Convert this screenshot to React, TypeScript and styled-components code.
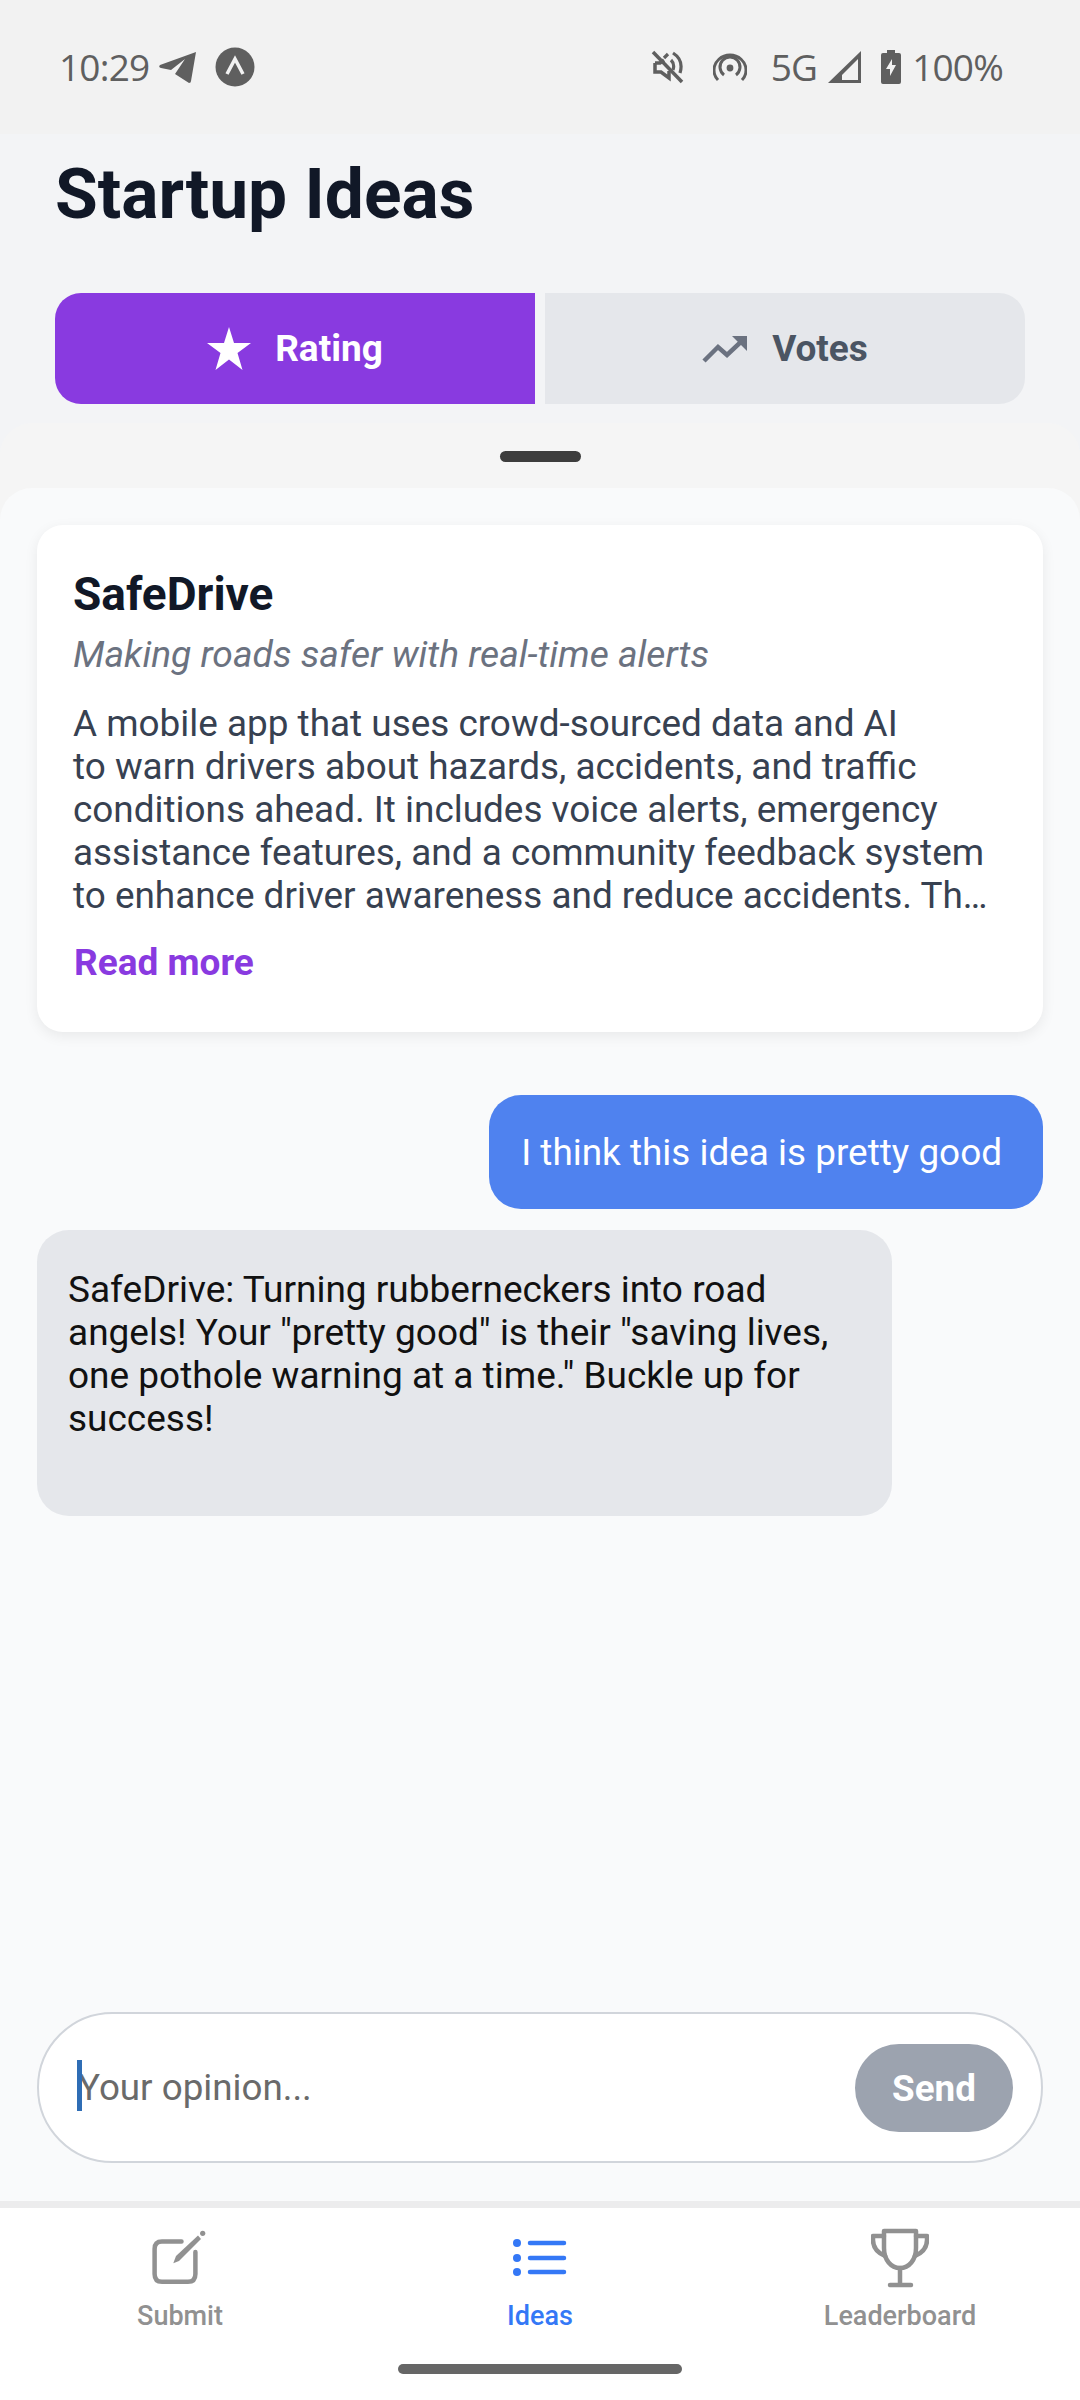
import React from "react";
import styled, { createGlobalStyle } from "styled-components";

const GlobalStyle = createGlobalStyle`
  html, body {
    margin: 0;
    padding: 0;
    background: #f3f4f6;
    font-family: Roboto, "Liberation Sans", sans-serif;
  }
  * { box-sizing: border-box; }
`;

const Screen = styled.div`
  width: 1080px;
  height: 2400px;
  display: flex;
  flex-direction: column;
  overflow: hidden;
  background: #f3f4f6;
`;

// System status bar
const StatusBar = styled.div`
  height: 134px;
  flex: none;
  background: #f2f2f2;
  display: flex;
  align-items: center;
  justify-content: space-between;
  padding: 0 77px 0 59px;
  color: #5f5f5f;
  font-size: 37px;
`;

const StatusGroup = styled.div`
  display: flex;
  align-items: center;
`;

const StatusText = styled.span<{ $left?: number }>`
  margin-left: ${(p) => p.$left ?? 0}px;
  font-family: "Open Sans", Roboto, sans-serif;
  letter-spacing: -0.8px;
  line-height: 40px;
`;

const StatusIcon = styled.svg<{ $left?: number }>`
  display: block;
  flex: none;
  margin-left: ${(p) => p.$left ?? 0}px;
`;

// Header + tabs
const Header = styled.div`
  flex: none;
  height: 159px;
  padding: 21px 55px 0;
`;

const Title = styled.h1`
  margin: 0;
  font-size: 69.5px;
  line-height: 80px;
  font-weight: 700;
  color: #111827;
`;

const Tabs = styled.div`
  flex: none;
  display: flex;
  gap: 10px;
  padding: 0 55px;
`;

const Tab = styled.div<{ $active?: boolean; $side: "left" | "right" }>`
  flex: 1;
  height: 111px;
  display: flex;
  align-items: center;
  justify-content: center;
  gap: 24px;
  background: ${(p) => (p.$active ? "#893ae0" : "#e5e7eb")};
  color: ${(p) => (p.$active ? "#ffffff" : "#4b5563")};
  border-radius: ${(p) => (p.$side === "left" ? "26px 0 0 26px" : "0 26px 26px 0")};
  font-size: 37px;
  font-weight: 700;
`;

// Bottom sheet
const SheetBackdrop = styled.div`
  flex: 1;
  min-height: 0;
  margin-top: 19px;
  display: flex;
  flex-direction: column;
  background: #f5f5f5;
  border-radius: 32px 32px 0 0;
`;

const HandleArea = styled.div`
  flex: none;
  height: 65px;
  padding-top: 28px;
  display: flex;
  justify-content: center;
`;

const Handle = styled.div`
  width: 81px;
  height: 11px;
  border-radius: 6px;
  background: #3d3d3d;
`;

const Sheet = styled.div`
  flex: 1;
  min-height: 0;
  display: flex;
  flex-direction: column;
  padding: 37px 37px 38px;
  background: #f9fafb;
  border-radius: 32px 32px 0 0;
`;

const Card = styled.div`
  flex: none;
  height: 507px;
  padding: 43px 36px 0;
  background: #ffffff;
  border-radius: 26px;
  box-shadow: 0 4px 14px rgba(0, 0, 0, 0.07);
`;

const CardTitle = styled.h2`
  margin: 0;
  font-size: 46px;
  line-height: 52px;
  font-weight: 700;
  color: #111827;
`;

const Tagline = styled.p`
  margin: 12px 0 0;
  font-size: 37.2px;
  line-height: 44px;
  font-style: italic;
  color: #6b7280;
`;

const Body = styled.p`
  margin: 26px 0 0;
  font-size: 36.9px;
  line-height: 43px;
  color: #374151;
`;

const BodyLine = styled.span`
  display: block;
  white-space: nowrap;
`;

const ReadMore = styled.div`
  margin: 24px 0 0 1px;
  font-size: 37px;
  line-height: 44px;
  font-weight: 700;
  color: #893ae0;
`;

const Messages = styled.div`
  flex: 1;
  min-height: 0;
  display: flex;
  flex-direction: column;
  gap: 21px;
  padding-top: 63px;
`;

const UserBubble = styled.div`
  align-self: flex-end;
  max-width: 85%;
  padding: 36px 41px 35px 32px;
  background: #4f82ef;
  color: #ffffff;
  border-radius: 32px;
  font-size: 36.9px;
  line-height: 43px;
`;

const BotBubble = styled.div`
  align-self: flex-start;
  width: 855px;
  height: 286px;
  padding: 38px 31px;
  background: #e5e7eb;
  color: #111111;
  border-radius: 32px;
  font-size: 37px;
  line-height: 43px;
`;

const InputBar = styled.div`
  position: relative;
  flex: none;
  height: 151px;
  display: flex;
  align-items: center;
  gap: 16px;
  padding: 0 28px 0 39px;
  background: #ffffff;
  border: 2px solid #d1d5db;
  border-radius: 76px;
`;

const Caret = styled.span`
  position: absolute;
  left: 38px;
  top: 46px;
  width: 5px;
  height: 51px;
  background: #2f6db5;
`;

const OpinionInput = styled.input`
  flex: 1;
  min-width: 0;
  border: none;
  outline: none;
  padding: 0;
  background: transparent;
  font-family: Roboto, sans-serif;
  font-size: 36.75px;
  &::placeholder {
    color: #6a6a6a;
    opacity: 1;
  }
`;

const SendButton = styled.div`
  flex: none;
  width: 158px;
  height: 88px;
  display: flex;
  align-items: center;
  justify-content: center;
  background: #9ca3af;
  color: #ffffff;
  border-radius: 44px;
  font-size: 36.75px;
  font-weight: 700;
  padding-top: 2px;
`;

// Bottom navigation
const Nav = styled.div`
  flex: none;
  height: 199px;
  display: grid;
  grid-template-columns: repeat(3, 1fr);
  background: #ffffff;
  border-top: 7px solid #ececed;
  position: relative;
`;

const NavItem = styled.div<{ $active?: boolean }>`
  display: flex;
  flex-direction: column;
  align-items: center;
  color: ${(p) => (p.$active ? "#3478f6" : "#919191")};
  font-size: 27px;
  font-weight: 500;
`;

const NavIconSlot = styled.div`
  margin-top: 20px;
  height: 60px;
  display: flex;
  align-items: center;
  justify-content: center;
`;

const NavLabel = styled.span`
  margin-top: 13px;
  line-height: 30px;
`;

const HomeBar = styled.div`
  position: absolute;
  left: 398px;
  bottom: 26px;
  width: 284px;
  height: 10px;
  border-radius: 5px;
  background: #666666;
`;

const App = () => (
  <Screen>
    <GlobalStyle />
    <StatusBar>
      <StatusGroup>
        <StatusText>10:29</StatusText>
        <StatusIcon $left={9} width="40" height="34" viewBox="0 0 40 34">
          <path
            d="M38 2 L2 15 Q0 17 3 18 L13 20 L27 9 L17 24 L31 33 Q33 33 33 31 Z"
            fill="#5f5f5f"
          />
        </StatusIcon>
        <StatusIcon $left={17} width="40" height="40" viewBox="0 0 40 40">
          <circle cx="20" cy="20" r="19.5" fill="#5f5f5f" />
          <path d="M12 27 L20 12 L28 27" fill="none" stroke="#f2f2f2" strokeWidth="3.5" />
        </StatusIcon>
      </StatusGroup>
      <StatusGroup>
        <StatusIcon width="34" height="34" viewBox="0 0 34 34" fill="none" stroke="#5f5f5f">
          <path d="M2 2 L31 32" strokeWidth="3.5" />
          <path d="M4 13 H9 L13 10 M18 21 V28 L10 22 H4 V13" strokeWidth="3.5" />
          <path d="M17 4 L13 8 M20 10 Q24 14 22 20 M22 3 Q33 10 29 23" strokeWidth="3.2" />
        </StatusIcon>
        <StatusIcon $left={28} width="34" height="30" viewBox="0 0 34 30" fill="none" stroke="#5f5f5f">
          <circle cx="17" cy="16" r="3.4" fill="#5f5f5f" stroke="none" />
          <path d="M11 23 A10 10 0 1 1 23 23" strokeWidth="3" />
          <path d="M5 28 A16 15 0 1 1 29 28" strokeWidth="3" />
        </StatusIcon>
        <StatusText $left={24}>5G</StatusText>
        <StatusIcon $left={11} width="33" height="32" viewBox="0 0 33 32">
          <path fillRule="evenodd" d="M33 0 V32 H0 Z M30 8 L14 24 V29 H30 Z" fill="#5f5f5f" />
        </StatusIcon>
        <StatusIcon $left={20} width="20" height="34" viewBox="0 0 20 34">
          <path
            fillRule="evenodd"
            d="M6 0 H14 V3 H18 Q20 3 20 5 V32 Q20 34 18 34 H2 Q0 34 0 32 V5 Q0 3 2 3 H6 Z M11 9 L5 19 H9 V26 L15 15 H11 Z"
            fill="#5f5f5f"
          />
        </StatusIcon>
        <StatusText $left={11}>100%</StatusText>
      </StatusGroup>
    </StatusBar>

    <Header>
      <Title>Startup Ideas</Title>
    </Header>

    <Tabs>
      <Tab $active $side="left">
        <svg width="44" height="44" viewBox="0 0 44 44">
          <path d="M22 0 L27 16 L44 16 L30.5 26 L35.5 43 L22 32.5 L8.5 43 L13.5 26 L0 16 L17 16 Z" fill="#fff" />
        </svg>
        Rating
      </Tab>
      <Tab $side="right">
        <svg width="46" height="28" viewBox="0 0 46 28" fill="none">
          <path d="M2 26 L16 12 L25 20 L42 4" stroke="#6b7280" strokeWidth="4.5" />
          <path d="M30 1 H45 V16 Z" fill="#6b7280" />
        </svg>
        Votes
      </Tab>
    </Tabs>

    <SheetBackdrop>
      <HandleArea>
        <Handle />
      </HandleArea>
      <Sheet>
        <Card>
          <CardTitle>SafeDrive</CardTitle>
          <Tagline>Making roads safer with real-time alerts</Tagline>
          <Body>
            <BodyLine>A mobile app that uses crowd-sourced data and AI</BodyLine>
            <BodyLine>to warn drivers about hazards, accidents, and traffic</BodyLine>
            <BodyLine>conditions ahead. It includes voice alerts, emergency</BodyLine>
            <BodyLine>assistance features, and a community feedback system</BodyLine>
            <BodyLine>to enhance driver awareness and reduce accidents. Th…</BodyLine>
          </Body>
          <ReadMore>Read more</ReadMore>
        </Card>

        <Messages>
          <UserBubble>I think this idea is pretty good</UserBubble>
          <BotBubble>
            SafeDrive: Turning rubberneckers into road angels! Your "pretty good" is their "saving lives, one
            pothole warning at a time." Buckle up for success!
          </BotBubble>
        </Messages>

        <InputBar>
          <OpinionInput placeholder="Your opinion..." readOnly />
          <Caret />
          <SendButton>Send</SendButton>
        </InputBar>
      </Sheet>
    </SheetBackdrop>

    <Nav>
      <NavItem>
        <NavIconSlot>
          <svg width="56" height="58" viewBox="0 0 56 58" fill="none" stroke="#919191" strokeLinecap="round">
            <path d="M29.5 12.5 H10 Q2.6 12.5 2.6 20 V45 Q2.6 52.8 10 52.8 H36 Q43.4 52.8 43.4 45 V23" strokeWidth="4.5" />
            <path d="M21.3 34.3 L24 27 L46 6.5 L49 10 L27 32 Z" fill="#919191" stroke="none" />
            <circle cx="50.7" cy="4.3" r="2.6" fill="#919191" stroke="none" />
          </svg>
        </NavIconSlot>
        <NavLabel>Submit</NavLabel>
      </NavItem>
      <NavItem $active>
        <NavIconSlot>
          <svg width="56" height="46" viewBox="0 0 56 46" fill="none" stroke="#3478f6" strokeLinecap="round">
            <path d="M18 8 H52 M18 23 H52 M18 37 H52" strokeWidth="4.5" />
            <circle cx="5" cy="8" r="4" fill="#3478f6" stroke="none" />
            <circle cx="5" cy="23" r="4" fill="#3478f6" stroke="none" />
            <circle cx="5" cy="37" r="4" fill="#3478f6" stroke="none" />
          </svg>
        </NavIconSlot>
        <NavLabel>Ideas</NavLabel>
      </NavItem>
      <NavItem>
        <NavIconSlot>
          <svg width="58" height="60" viewBox="0 0 58 60" fill="none" stroke="#919191" strokeLinecap="round" strokeLinejoin="round">
            <path d="M13 3 H45 V20 C45 32 38 40 29 40 C20 40 13 32 13 20 Z" strokeWidth="4.5" />
            <path d="M13 8 H2 V12 C2 20 7 25 14 28 M45 8 H56 V12 C56 20 51 25 44 28" strokeWidth="4.5" />
            <path d="M29 40 V56 M19 57 H40" strokeWidth="4.5" />
          </svg>
        </NavIconSlot>
        <NavLabel>Leaderboard</NavLabel>
      </NavItem>
      <HomeBar />
    </Nav>
  </Screen>
);

export default App;
